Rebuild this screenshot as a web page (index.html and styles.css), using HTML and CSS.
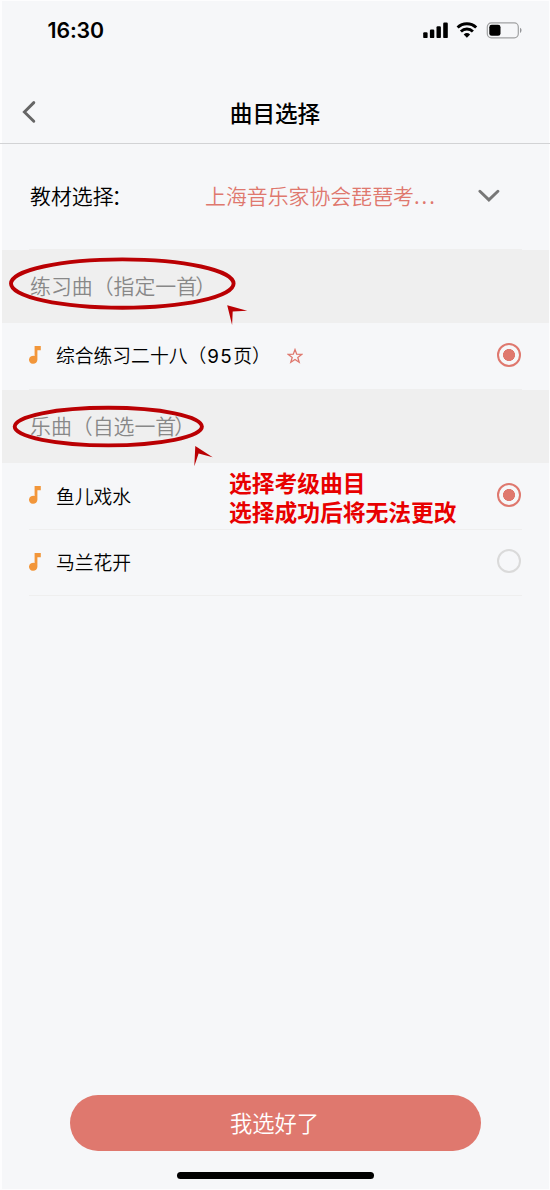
FILE: index.html
```html
<!DOCTYPE html>
<html lang="zh-CN">
<head>
<meta charset="utf-8">
<title>曲目选择</title>
<link rel="stylesheet" href="styles.css">
</head>
<body>
<svg class="defs" width="0" height="0">
  <symbol id="note" viewBox="0 0 12 18"><path d="M5.6 0h6.2v4.2H8.4v9.4A4.2 4 0 1 1 5.6 10z" fill="#f2963a"/></symbol>
</svg>
<div class="screen">
  <div class="status">
    <span class="time">16:30</span>
    <svg class="indicators" width="100" height="18" viewBox="0 0 100 18">
      <rect x="0.2" y="10.3" width="4.4" height="5.8" rx="1.2"/>
      <rect x="6.9" y="7.6" width="4.4" height="8.5" rx="1.2"/>
      <rect x="13.5" y="4.2" width="4.4" height="11.9" rx="1.2"/>
      <rect x="20.2" y="0.6" width="4.6" height="15.5" rx="1.2"/>
      <g fill="none" stroke="#000" stroke-width="2.9">
        <path d="M34.6 5.5a13.3 13.3 0 0 1 18.6 0"/>
        <path d="M37.9 9.5a8.6 8.6 0 0 1 12 0"/>
      </g>
      <path d="M40.7 12.4a4.7 4.7 0 0 1 6.4 0L43.9 15.8z"/>
      <rect x="64.3" y="0.9" width="31" height="14.9" rx="4" fill="none" stroke="#a0a1a2" stroke-width="1.2"/>
      <rect x="66.3" y="2.8" width="11.2" height="11" rx="2.4"/>
      <path d="M97 5.8c2 .7 2 4.4 0 5.1z" fill="#96979a"/>
    </svg>
  </div>
  <header class="nav">
    <svg class="back" width="14" height="24" viewBox="0 0 14 24"><path d="M11.8 2.6L2.4 12l9.4 9.3" fill="none" stroke="#666" stroke-width="2.9" stroke-linecap="round"/></svg>
    <h1 class="title">曲目选择</h1>
  </header>
  <div class="picker">
    <span class="picker-label">教材选择<span class="close">：</span></span>
    <span class="picker-value">上海音乐家协会琵琶考<span class="dots">...</span></span>
    <svg class="chevron" width="22" height="14" viewBox="0 0 22 14"><path d="M1.9 2.2l9 8.7 9-8.7" fill="none" stroke="#777" stroke-width="2.9" stroke-linecap="round"/></svg>
  </div>
  <div class="section">练习曲（指定一首<span class="close">）</span>
    <svg class="mark" width="250" height="76" viewBox="0 0 250 76"><ellipse cx="122.3" cy="34.6" rx="111.3" ry="24.2" fill="none" stroke="#ba0003" stroke-width="3.9"/><path d="M227.2 56.3l20 5.4-14.5.8-.6 13.6z" fill="#ba0003"/></svg>
  </div>
  <div class="row"><svg class="note"><use href="#note"/></svg><span class="song">综合练习二十八（<span class="num">95</span>页）</span>
    <svg class="star" width="16" height="16" viewBox="0 0 16 16"><path d="M8 1.6l1.7 4.6 5 .2-3.9 3 1.4 4.9L8 11.5l-4.2 2.8 1.4-4.9-3.9-3 5-.2z" fill="none" stroke="#df786e" stroke-width="1.3"/></svg>
    <span class="radio on"></span></div>
  <div class="section">乐曲（自选一首<span class="close">）</span>
    <svg class="mark" width="220" height="80" viewBox="0 0 220 80"><ellipse cx="108.3" cy="37.6" rx="93.6" ry="18.8" fill="none" stroke="#ba0003" stroke-width="3.9"/><path d="M195.3 57l17.4 11.2-14.1-3.6-4.3 12.7z" fill="#ba0003"/></svg>
  </div>
  <div class="row"><svg class="note"><use href="#note"/></svg><span class="song">鱼儿戏水</span><span class="radio on"></span>
    <p class="hint">选择考级曲目<br>选择成功后将无法更改</p></div>
  <div class="row last"><svg class="note"><use href="#note"/></svg><span class="song">马兰花开</span><span class="radio"></span></div>
  <div class="footer">
    <button class="confirm">我选好了</button>
    <div class="home-bar"></div>
  </div>
</div>
</body>
</html>
```
FILE: styles.css
```css
* { box-sizing: border-box; }
body { margin: 0; background: #f6f7f9; font-family: "Noto Sans CJK SC", sans-serif; color: #111; }
.defs { display: block; }
.screen { height: 1190px; display: flex; flex-direction: column; border: solid #fdfdfe; border-width: 1px 1px 1px 2px; white-space: nowrap; }
.status { height: 79px; padding: 17px 26px 0 45.5px; display: flex; justify-content: space-between; align-items: flex-start; }
.time { font: 600 21.3px/24px Inter, sans-serif; letter-spacing: -.1px; color: #000; }
.indicators { margin-top: 4px; }
.nav { height: 64px; margin: 0 -1px 0 -2px; border-bottom: 1px solid #d2d3d5; display: grid; grid-template-columns: 22px 1fr 22px; align-items: center; }
.back { margin: 0 0 0 22px; }
.title { margin: 2px 0 0; text-align: center; font-size: 22.6px; line-height: 32px; font-weight: 500; color: #000; }
.picker { height: 106px; margin: 0 27px; padding-top: 35px; border-bottom: 1px solid #efefef; display: flex; align-items: flex-start; font-size: 20.9px; line-height: 32px; flex: none; }
.picker-label { width: 176px; padding-left: 1px; font-weight: 350; color: #000; }
.picker-value { width: 273px; color: #df786e; font-weight: 350; }
.dots { letter-spacing: 2px; }
.chevron { margin-top: 10px; }
.section { position: relative; height: 73px; padding: 19px 0 0 28px; background: #efefef; font-size: 20.9px; line-height: 32px; font-weight: 350; color: #888; flex: none; }
.close { margin-left: -2px; }
.mark { position: absolute; left: -2px; top: -1px; z-index: 1; }
.row { position: relative; height: 67px; margin: 0 27px; border-bottom: 1px solid #efefef; display: flex; align-items: center; flex: none; }
.last { height: 66px; }
.note { width: 12px; height: 18px; margin: -2px 15px 0 0; flex: none; }
.song { font-size: 18.8px; line-height: 28px; margin-top: -1px; font-weight: 350; color: #000; }
.num { font-family: Inter, sans-serif; font-weight: 400; letter-spacing: 1.4px; margin-left: 1px; }
.star { margin-left: 16px; }
.radio { width: 24px; height: 24px; border: 2px solid #dadada; border-radius: 50%; margin-left: auto; margin-top: -3px; margin-right: 1px; }
.on { border-color: #df786e; background: radial-gradient(circle, #df786e 5.7px, transparent 6.3px); }
.hint { position: absolute; left: 200px; top: 5px; margin: 0; font-size: 22.75px; line-height: 29px; font-weight: 700; color: #e80000; z-index: 2; }
.footer { margin-top: auto; height: 94px; display: flex; flex-direction: column; align-items: center; }
.confirm { width: 411px; height: 56px; padding: 0 2px 2px 0; border: 0; border-radius: 28px; background: #df786e; color: #fff; font: 350 22.3px/32px "Noto Sans CJK SC", sans-serif; }
.home-bar { width: 197px; height: 7px; margin-top: 21px; border-radius: 4px; background: #000; }
```
